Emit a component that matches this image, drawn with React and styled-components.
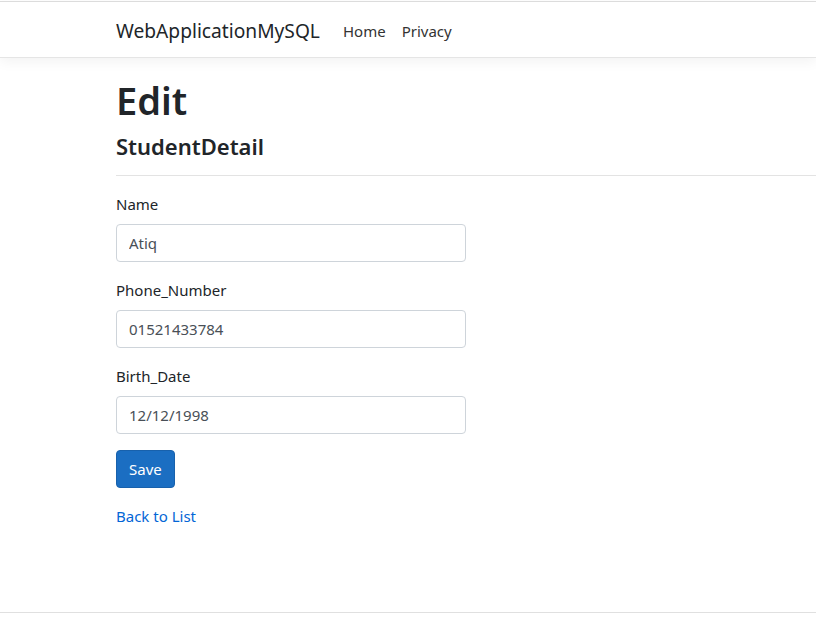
import React from "react";
import styled, { createGlobalStyle } from "styled-components";

const Global = createGlobalStyle`
  html, body { margin: 0; padding: 0; background: #fff; }
  body {
    font-family: "Noto Sans", "Open Sans", sans-serif;
    color: #212529;
    font-size: 16px;
    line-height: 1.5;
    overflow: hidden;
  }
  * { box-sizing: border-box; }
`;

const Page = styled.div`
  padding-top: 1px;
  min-height: 622px;
`;

const Navbar = styled.header`
  border-top: 1px solid #dcdcdc;
  border-bottom: 1px solid #e5e5e5;
  box-shadow: 0 4px 12px rgba(0, 0, 0, 0.05);
  height: 57px;
  display: flex;
  align-items: center;
  padding-left: 116px;
  padding-top: 4px;
  background: #fff;
`;

const Brand = styled.a`
  font-size: 19.2px;
  color: #212529;
  text-decoration: none;
  margin-right: 15px;
`;

const NavList = styled.nav`
  display: flex;
`;

const NavLink = styled.a`
  font-size: 15px;
  color: #333;
  text-decoration: none;
  padding: 0 8px;
`;

const Main = styled.main`
  padding-left: 116px;
  padding-top: 20px;
`;

const Title = styled.h1`
  font-size: 38px;
  font-weight: 600;
  line-height: 1.2;
  margin: 0 0 8px;
`;

const Subtitle = styled.h4`
  font-size: 22px;
  font-weight: 600;
  line-height: 1.3;
  margin: 0;
`;

const Rule = styled.hr`
  border: 0;
  border-top: 1px solid #e3e3e3;
  margin: 15px 0 16px;
`;

const Form = styled.form`
  width: 350px;
`;

const Group = styled.div`
  margin-bottom: 16px;
`;

const Label = styled.label`
  display: block;
  font-size: 15px;
  line-height: 24px;
  margin-bottom: 8px;
`;

const Input = styled.input`
  display: block;
  width: 100%;
  height: 38px;
  padding: 6px 12px;
  font-family: inherit;
  font-size: 15px;
  color: #495057;
  border: 1px solid #ced4da;
  border-radius: 4px;
  background: #fff;
  outline: none;
`;

const Button = styled.button`
  height: 38px;
  padding: 0 12px;
  font-family: inherit;
  font-size: 15px;
  color: #fff;
  background: #1b6ec2;
  border: 1px solid #1861ac;
  border-radius: 4px;
`;

const BackLink = styled.a`
  display: block;
  color: #0366d6;
  text-decoration: none;
  font-size: 15px;
  line-height: 24px;
`;

const Footer = styled.footer`
  margin-top: 84px;
  border-top: 1px solid #e0e0e0;
  height: 10px;
`;

const fields = [
  { label: "Name", value: "Atiq" },
  { label: "Phone_Number", value: "01521433784" },
  { label: "Birth_Date", value: "12/12/1998" },
];

export default function App() {
  return (
    <Page>
      <Global />
      <Navbar>
        <Brand href="#">WebApplicationMySQL</Brand>
        <NavList>
          <NavLink href="#">Home</NavLink>
          <NavLink href="#">Privacy</NavLink>
        </NavList>
      </Navbar>
      <Main>
        <Title>Edit</Title>
        <Subtitle>StudentDetail</Subtitle>
        <Rule />
        <Form onSubmit={(e) => e.preventDefault()}>
          {fields.map((f) => (
            <Group key={f.label}>
              <Label>{f.label}</Label>
              <Input defaultValue={f.value} />
            </Group>
          ))}
          <Group>
            <Button type="submit">Save</Button>
          </Group>
        </Form>
        <BackLink href="#">Back to List</BackLink>
      </Main>
      <Footer />
    </Page>
  );
}
